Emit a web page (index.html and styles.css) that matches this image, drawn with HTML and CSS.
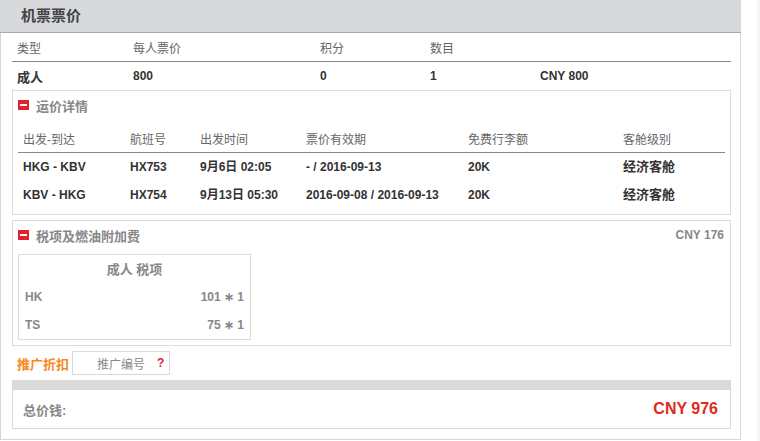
FILE: index.html
```html
<!DOCTYPE html>
<html>
<head>
<meta charset="utf-8">
<link rel="stylesheet" href="styles.css">
</head>
<body>
<div class="page">
  <div class="panel">
    <div class="panel-head">机票票价</div>
    <div class="panel-body">
      <div class="grid sum-grid head-row">
        <div>类型</div><div>每人票价</div><div>积分</div><div>数目</div><div></div>
      </div>
      <div class="grid sum-grid data-row">
        <div class="cjk">成人</div><div>800</div><div>0</div><div>1</div><div>CNY 800</div>
      </div>

      <div class="box fare-box">
        <div class="box-title"><span class="minus"></span><span class="box-name">运价详情</span></div>
        <div class="grid fare-grid head-row">
          <div>出发-到达</div><div>航班号</div><div>出发时间</div><div>票价有效期</div><div>免费行李额</div><div>客舱级别</div>
        </div>
        <div class="grid fare-grid data-row">
          <div>HKG - KBV</div><div>HX753</div><div>9月6日 02:05</div><div>- / 2016-09-13</div><div>20K</div><div class="cjk">经济客舱</div>
        </div>
        <div class="grid fare-grid data-row">
          <div>KBV - HKG</div><div>HX754</div><div>9月13日 05:30</div><div>2016-09-08 / 2016-09-13</div><div>20K</div><div class="cjk">经济客舱</div>
        </div>
      </div>

      <div class="box tax-box">
        <div class="box-title"><span class="minus"></span><span class="box-name">税项及燃油附加费</span><span class="box-amount">CNY 176</span></div>
        <div class="tax-inner">
          <div class="tax-head">成人 税项</div>
          <div class="tax-row"><span>HK</span><span>101 ∗ 1</span></div>
          <div class="tax-row"><span>TS</span><span>75 ∗ 1</span></div>
        </div>
      </div>

      <div class="promo">
        <span class="promo-label">推广折扣</span>
        <div class="promo-input"><span class="ph">推广编号</span><span class="q">?</span></div>
      </div>

      <div class="total-bar"></div>
      <div class="total-box">
        <span class="total-label">总价钱:</span>
        <span class="total-amount">CNY 976</span>
      </div>
    </div>
  </div>
  <div class="strip"></div>
</div>
</body>
</html>
```

FILE: styles.css
```css
html, body {
  margin: 0;
  padding: 0;
  background: #fff;
}
body {
  font-family: "Liberation Sans", "Noto Sans CJK SC", sans-serif;
  font-size: 12px;
  color: #333;
}
.page {
  display: flex;
  width: 760px;
  height: 441px;
}
.panel {
  box-sizing: border-box;
  width: 741px;
  height: 440px;
  border: 1px solid #d6d6d6;
  border-top: none;
}
.panel-head {
  margin: 0 -1px;
  height: 32px;
  line-height: 31px;
  background: #d8d9dd;
  border-bottom: 1px solid #a9a9a9;
  padding-left: 21px;
  font-size: 15px;
  font-weight: bold;
  color: #444;
}
.panel-body {
  padding: 0 9px 0 11px;
}
.strip {
  margin-left: 16px;
  width: 3px;
  height: 441px;
  background: #f5f5f5;
}
.grid {
  display: grid;
  align-items: center;
}
.grid > div {
  padding-left: 5px;
  white-space: nowrap;
}
.sum-grid {
  grid-template-columns: 116px 187px 110px 110px 1fr;
}
.fare-grid {
  grid-template-columns: 107px 70px 106px 162px 155px 1fr;
}
.head-row {
  height: 28px;
  color: #666;
  border-bottom: 1px solid #888;
}
.data-row {
  height: 28px;
  font-weight: bold;
  color: #333;
}
.data-row .cjk {
  font-size: 13px;
}
.box {
  box-sizing: border-box;
  border: 1px solid #dcdcdc;
  padding: 0 5px 5px 5px;
}
.fare-box {
  height: 125px;
}
.fare-box .box-title {
  margin-bottom: 5px;
}
.fare-box .data-row {
  line-height: 26px;
}
.box-title {
  display: flex;
  align-items: center;
  height: 28px;
  font-size: 13px;
  font-weight: bold;
  color: #888;
}
.minus {
  position: relative;
  width: 11px;
  height: 10px;
  background: #e3202d;
  margin-right: 7px;
}
.minus::after {
  content: "";
  position: absolute;
  left: 2px;
  right: 2px;
  top: 4px;
  height: 2px;
  background: #fff;
}
.box-name {
  flex: 1;
}
.box-amount {
  font-size: 12px;
  padding-right: 1px;
}
.tax-box {
  margin-top: 5px;
  height: 126px;
}
.tax-inner {
  box-sizing: border-box;
  margin-top: 5px;
  width: 233px;
  height: 86px;
  border: 1px solid #dcdcdc;
  color: #888;
  font-weight: bold;
}
.tax-head {
  height: 28px;
  line-height: 29px;
  text-align: center;
  font-size: 13px;
}
.tax-row {
  display: flex;
  justify-content: space-between;
  align-items: center;
  height: 28px;
  padding: 0 6px;
}
.promo {
  display: flex;
  align-items: center;
  height: 24px;
  margin: 5px 0 5px;
}
.promo-label {
  padding-left: 5px;
  width: 55px;
  font-size: 13px;
  font-weight: bold;
  color: #f7891f;
}
.promo-input {
  box-sizing: border-box;
  display: flex;
  align-items: center;
  width: 98px;
  height: 24px;
  border: 1px solid #d8d8d8;
  padding-left: 24px;
}
.ph {
  color: #888;
  font-size: 12px;
  width: 60px;
}
.q {
  color: #e3202d;
  font-weight: bold;
  font-size: 12px;
}
.total-bar {
  height: 10px;
  background: #d9d9d9;
}
.total-box {
  box-sizing: border-box;
  display: flex;
  justify-content: space-between;
  align-items: center;
  height: 39px;
  border: 1px solid #dcdcdc;
  border-top: none;
  padding: 0 12px 0 10px;
}
.total-label {
  font-size: 13px;
  font-weight: bold;
  color: #888;
}
.total-amount {
  font-size: 16px;
  font-weight: bold;
  color: #e02a1c;
}
```
